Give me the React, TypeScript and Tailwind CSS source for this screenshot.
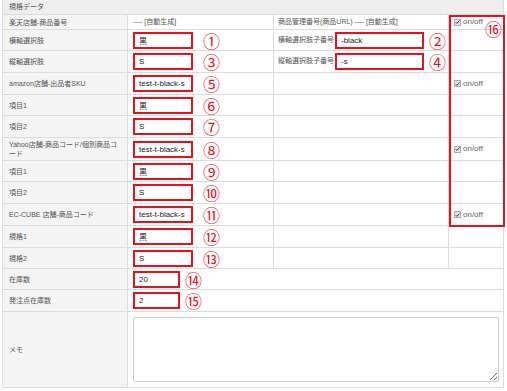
const RED = 'border-[#e8101a]';

const Circle = ({ n, ml = 'ml-[10px]' }: { n: string; ml?: string }) => (
	<span className={`${ml} text-[17px] leading-none text-[#e8101a] font-['Noto_Sans_CJK_JP',sans-serif]`}>{n}</span>
);

const Box = ({ value, w = 'w-[60px]' }: { value: string; w?: string }) => (
	<input
		readOnly
		value={value}
		className={`${w} h-[17px] border-2 ${RED} bg-white px-[4px] text-[8px] text-[#222] outline-none`}
	/>
);

const Check = () => (
	<div className="flex items-center pl-[5px] gap-[2px] text-[8px] text-[#666]">
		<span className="w-[7px] h-[7px] border border-[#aaa] bg-[#e6e6e6] flex items-center justify-center">
			<svg viewBox="0 0 8 8" className="w-[6px] h-[6px]">
				<path d="M1 4.2l2 2 4-4.4" fill="none" stroke="#333" strokeWidth="1.6" />
			</svg>
		</span>
		<span>on/off</span>
	</div>
);

type Row = {
	label: string;
	value: string;
	n: string;
	h: string;
	sub?: { label: string; value: string; n: string };
	check?: boolean;
};

const rows: Row[] = [
	{ label: '横軸選択肢', value: '黒', n: '①', h: 'h-[21px]', sub: { label: '横軸選択肢子番号', value: '-black', n: '②' } },
	{ label: '縦軸選択肢', value: 'S', n: '③', h: 'h-[22px]', sub: { label: '縦軸選択肢子番号', value: '-s', n: '④' } },
	{ label: 'amazon店舗-出品者SKU', value: 'test-t-black-s', n: '⑤', h: 'h-[22px]', check: true },
	{ label: '項目1', value: '黒', n: '⑥', h: 'h-[21px]' },
	{ label: '項目2', value: 'S', n: '⑦', h: 'h-[22px]' },
	{ label: 'Yahoo店舗-商品コード/個別商品コード', value: 'test-t-black-s', n: '⑧', h: 'h-[23px]', check: true },
	{ label: '項目1', value: '黒', n: '⑨', h: 'h-[21px]' },
	{ label: '項目2', value: 'S', n: '⑩', h: 'h-[22px]' },
	{ label: 'EC-CUBE 店舗-商品コード', value: 'test-t-black-s', n: '⑪', h: 'h-[22px]', check: true },
	{ label: '規格1', value: '黒', n: '⑫', h: 'h-[22px]' },
	{ label: '規格2', value: 'S', n: '⑬', h: 'h-[21px]' },
];

const labelCls = 'bg-[#f4f4f4] border-r border-[#dcdcdc] pl-[6px] pr-[8px] flex items-center text-[7px] leading-[9px] text-[#555]';
const cellCls = 'border-r border-[#dcdcdc] flex items-center';
const gridCls = 'grid grid-cols-[125px_146px_175px_1fr] border-b border-[#dcdcdc]';

export default function App() {
	return (
		<div className="bg-white w-[507px] h-[391px] font-['Liberation_Sans','Noto_Sans_CJK_JP',sans-serif]">
			<div className="relative ml-[2px] w-[502px] border-x border-b border-[#dcdcdc]">
				<div className="h-[15px] bg-[#eeeeee] border-b border-[#dcdcdc] pl-[6px] flex items-center text-[7px] text-[#555]">規格データ</div>

				<div className={`${gridCls} h-[15px]`}>
					<div className={labelCls}>楽天店舗-商品番号</div>
					<div className={`${cellCls} pl-[5px] text-[7px] text-[#555]`}>---- [自動生成]</div>
					<div className={`${cellCls} pl-[4px] text-[7px] text-[#555]`}>商品管理番号(商品URL) ---- [自動生成]</div>
					<div className="flex items-center"><Check /></div>
				</div>

				{rows.map((r, i) => (
					<div key={i} className={`${gridCls} ${r.h}`}>
						<div className={labelCls}>{r.label}</div>
						<div className={`${cellCls} pl-[5px]`}>
							<Box value={r.value} />
							<Circle n={r.n} />
						</div>
						<div className={`${cellCls} pl-[4px]`}>
							{r.sub && (
								<>
									<span className="text-[7px] text-[#555] mr-[1px]">{r.sub.label}</span>
									<Box value={r.sub.value} w="w-[89px]" />
									<Circle n={r.sub.n} ml="ml-[5px]" />
								</>
							)}
						</div>
						<div className="flex items-center">{r.check && <Check />}</div>
					</div>
				))}

				<div className="grid grid-cols-[125px_1fr] border-b border-[#dcdcdc] h-[21px]">
					<div className={labelCls}>在庫数</div>
					<div className="flex items-center pl-[5px]">
						<Box value="20" w="w-[47px]" />
						<Circle n="⑭" ml="ml-[5px]" />
					</div>
				</div>
				<div className="grid grid-cols-[125px_1fr] border-b border-[#dcdcdc] h-[22px]">
					<div className={labelCls}>発注点在庫数</div>
					<div className="flex items-center pl-[5px]">
						<Box value="2" w="w-[47px]" />
						<Circle n="⑮" ml="ml-[5px]" />
					</div>
				</div>
				<div className="grid grid-cols-[125px_1fr] h-[75px]">
					<div className={labelCls}>メモ</div>
					<div className="pl-[5px] pr-[4px] pt-[5px]">
						<textarea readOnly className="w-full h-[65px] border border-[#cfcfcf] rounded-[2px] bg-white block" />
					</div>
				</div>

				<div className={`absolute left-[446px] top-[15px] w-[56px] h-[212px] border-2 ${RED} flex justify-end items-start pt-[3px] pr-[1px]`}>
					<Circle n="⑯" ml="ml-0" />
				</div>
			</div>
		</div>
	);
}
